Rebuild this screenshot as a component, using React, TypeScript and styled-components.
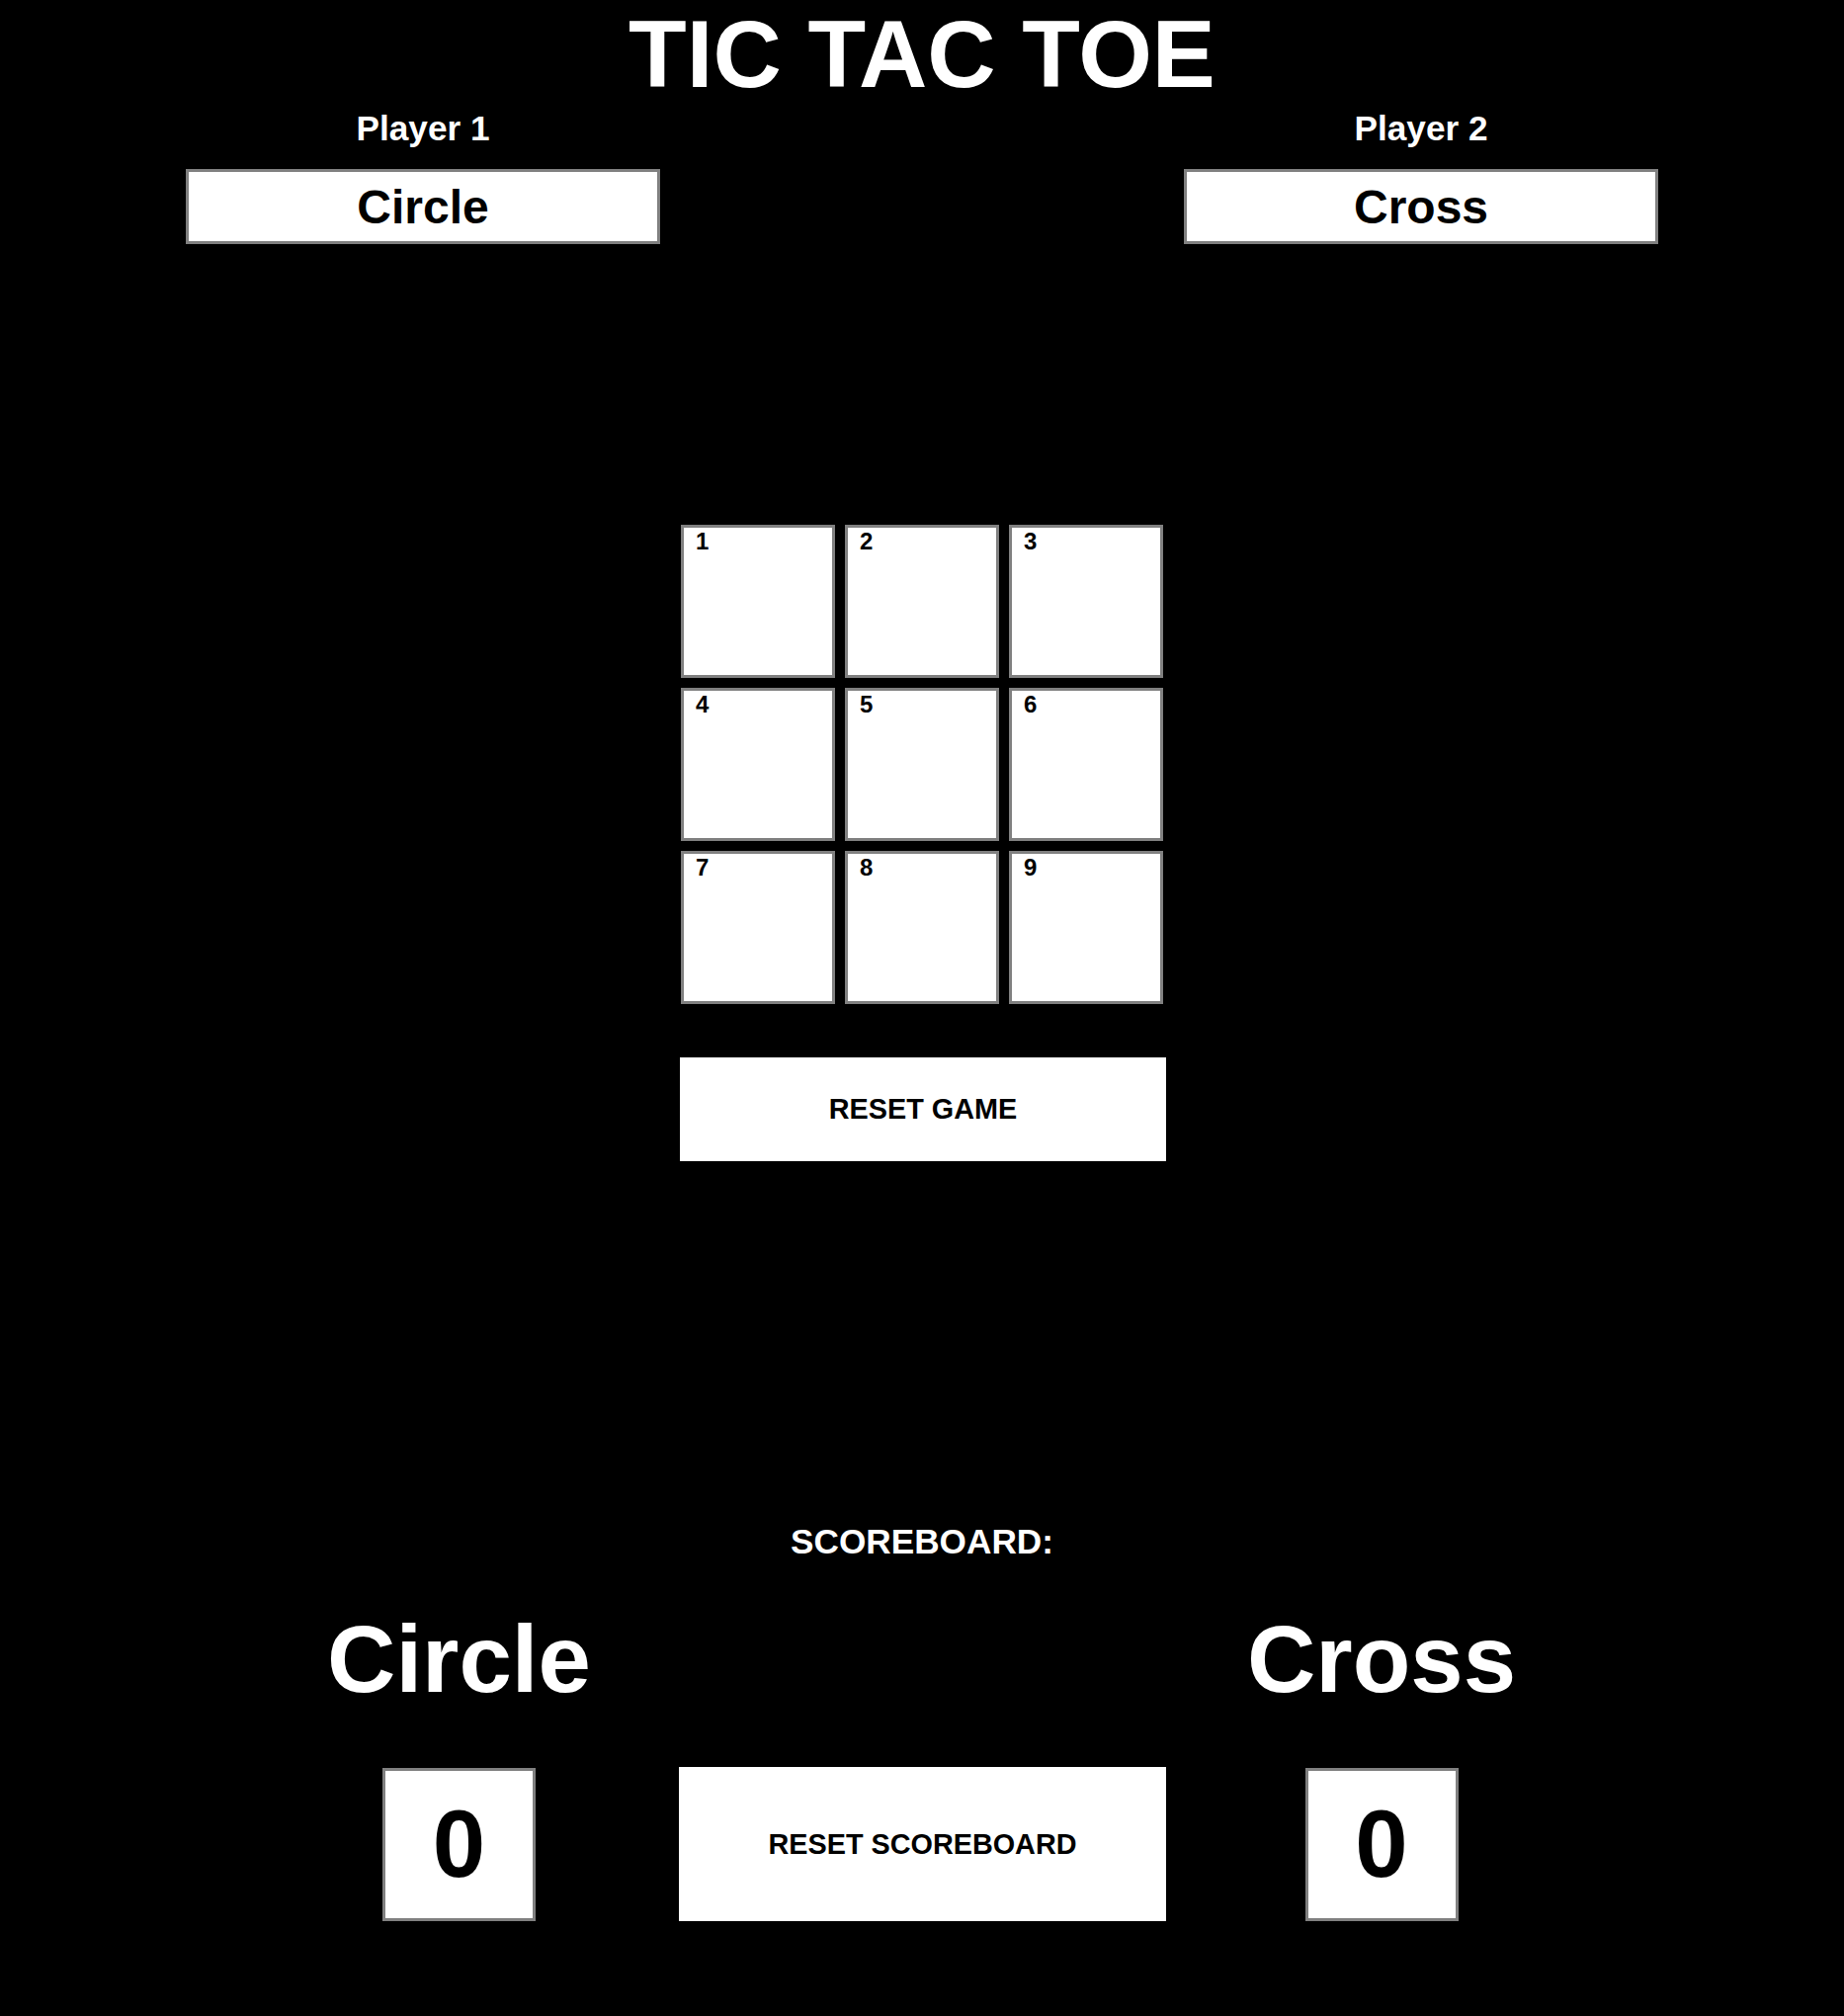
import React from "react";
import styled, { createGlobalStyle } from "styled-components";

const GlobalStyle = createGlobalStyle`
  html, body {
    margin: 0;
    padding: 0;
    background: #000000;
  }
  body {
    font-family: "Liberation Sans", Arial, Helvetica, sans-serif;
    color: #ffffff;
  }
  * {
    box-sizing: border-box;
  }
`;

const Page = styled.main`
  display: flex;
  flex-direction: column;
  align-items: center;
  width: 100%;
  min-height: 2040px;
  background: #000000;
`;

const Title = styled.h1`
  margin: 0;
  font-size: 96px;
  font-weight: 700;
  line-height: normal;
  color: #ffffff;
  text-align: center;
`;

const Players = styled.section`
  display: flex;
  justify-content: space-between;
  width: 100%;
  padding: 0 188px;
`;

const PlayerColumn = styled.div`
  display: flex;
  flex-direction: column;
  align-items: center;
  gap: 21px;
  width: 480px;
`;

const PlayerLabel = styled.h2`
  margin: 0;
  font-size: 35.2px;
  font-weight: 700;
  line-height: normal;
  color: #ffffff;
`;

const PlayerBox = styled.div`
  display: flex;
  align-items: center;
  justify-content: center;
  width: 100%;
  height: 76px;
  border: 3px solid #808080;
  background: #ffffff;
  color: #000000;
  font-size: 48px;
  font-weight: 700;
  line-height: normal;
`;

const Board = styled.div`
  display: grid;
  grid-template-columns: repeat(3, 156px);
  grid-auto-rows: 155px;
  gap: 10px;
  margin-top: 284px;
`;

const Cell = styled.div`
  border: 3px solid #808080;
  background: #ffffff;
  color: #000000;
  padding: 0 12px;
  font-size: 24px;
  font-weight: 700;
  line-height: normal;
  cursor: pointer;
`;

const ActionButton = styled.button<{ $height: number }>`
  width: 492px;
  height: ${(p) => p.$height}px;
  border: none;
  background: #ffffff;
  color: #000000;
  font-family: inherit;
  font-size: 28.8px;
  font-weight: 700;
  line-height: normal;
  cursor: pointer;
  padding: 0;
`;

const ResetGame = styled(ActionButton)`
  margin-top: 54px;
  margin-left: 2px;
`;

const ScoreTitle = styled.h2`
  margin: 365px 0 0;
  font-size: 35.2px;
  font-weight: 700;
  line-height: normal;
  color: #ffffff;
`;

const ScoreGrid = styled.section`
  display: grid;
  grid-template-columns: 445px 493px 436px;
  margin: 44px 8px 0 0;
  row-gap: 54px;
  align-items: center;
  justify-items: center;
`;

const ScoreName = styled.div<{ $col: number }>`
  grid-column: ${(p) => p.$col};
  grid-row: 1;
  font-size: 96px;
  font-weight: 700;
  line-height: normal;
  color: #ffffff;
`;

const ScoreBox = styled.div<{ $col: number }>`
  grid-column: ${(p) => p.$col};
  grid-row: 2;
  display: flex;
  align-items: center;
  justify-content: center;
  width: 155px;
  height: 155px;
  border: 3px solid #808080;
  background: #ffffff;
  color: #000000;
  font-size: 96px;
  font-weight: 700;
  line-height: normal;
`;

const ResetScore = styled(ActionButton)`
  grid-column: 2;
  grid-row: 2;
  width: 493px;
`;

const cells = [1, 2, 3, 4, 5, 6, 7, 8, 9];

export default function App() {
  return (
    <>
      <GlobalStyle />
      <Page>
        <Title>TIC TAC TOE</Title>
        <Players>
          <PlayerColumn>
            <PlayerLabel>Player 1</PlayerLabel>
            <PlayerBox>Circle</PlayerBox>
          </PlayerColumn>
          <PlayerColumn>
            <PlayerLabel>Player 2</PlayerLabel>
            <PlayerBox>Cross</PlayerBox>
          </PlayerColumn>
        </Players>
        <Board>
          {cells.map((n) => (
            <Cell key={n}>{n}</Cell>
          ))}
        </Board>
        <ResetGame $height={105}>RESET GAME</ResetGame>
        <ScoreTitle>SCOREBOARD:</ScoreTitle>
        <ScoreGrid>
          <ScoreName $col={1}>Circle</ScoreName>
          <ScoreName $col={3}>Cross</ScoreName>
          <ScoreBox $col={1}>0</ScoreBox>
          <ResetScore $height={156}>RESET SCOREBOARD</ResetScore>
          <ScoreBox $col={3}>0</ScoreBox>
        </ScoreGrid>
      </Page>
    </>
  );
}
